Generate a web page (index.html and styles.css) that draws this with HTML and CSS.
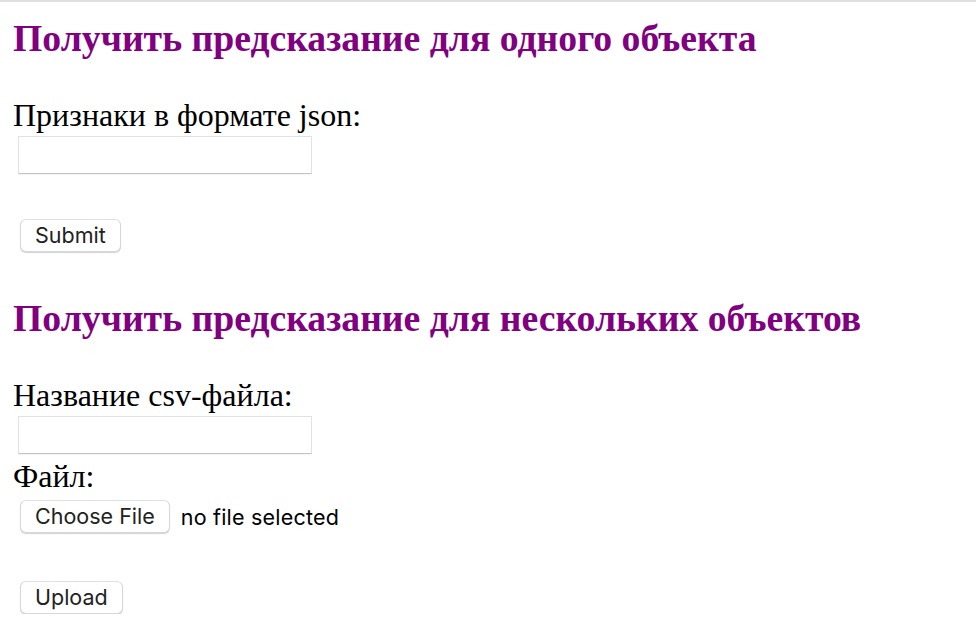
FILE: index.html
```html
<!DOCTYPE html>
<html lang="ru">
<head>
<meta charset="utf-8">
<title>Предсказание</title>
<link rel="stylesheet" href="styles.css">
</head>
<body>
<main class="page">
  <section class="block">
    <h2 class="title">Получить предсказание для одного объекта</h2>
    <form class="form">
      <label class="label" for="json">Признаки в формате json:</label>
      <input class="field" id="json" type="text">
      <div class="submit-row"><button class="btn" type="button">Submit</button></div>
    </form>
  </section>
  <section class="block block-second">
    <h2 class="title">Получить предсказание для нескольких объектов</h2>
    <form class="form">
      <label class="label" for="csv">Название csv-файла:</label>
      <input class="field" id="csv" type="text">
      <label class="label label-file">Файл:</label>
      <div class="file-row">
        <button class="btn" type="button">Choose File</button>
        <span class="file-name">no file selected</span>
      </div>
      <div class="submit-row upload-row"><button class="btn" type="button">Upload</button></div>
    </form>
  </section>
</main>
</body>
</html>
```

FILE: styles.css
```css
html, body {
  margin: 0;
  padding: 0;
  background: #ffffff;
}
body {
  border-top: 2px solid #e0e0e0;
  font-family: "Liberation Serif", "Times New Roman", serif;
  color: #000;
}
.page {
  display: flex;
  flex-direction: column;
  padding: 0 0 0 13px;
}
.block {
  display: flex;
  flex-direction: column;
}
.title {
  margin: 16px 0 0 0;
  font-family: "Liberation Serif", "Times New Roman", serif;
  font-weight: bold;
  font-size: 37.7px;
  line-height: 40px;
  color: #800080;
}
.block-second .title {
  margin-top: 46px;
}
.form {
  display: flex;
  flex-direction: column;
  align-items: flex-start;
  margin: 0;
}
.label {
  margin-top: 40px;
  font-size: 32px;
  line-height: 34px;
}
.field {
  margin: 4px 0 0 5px;
  width: 294px;
  height: 38px;
  box-sizing: border-box;
  border: 1px solid #e2e2e2;
  border-bottom-color: #c4c4c4;
  box-shadow: 0 1px 0 rgba(0,0,0,0.04);
  background: #fff;
  padding: 0 6px;
  outline: none;
}
.label-file {
  margin-top: 5px;
}
.submit-row {
  margin-top: 45px;
  padding-left: 7px;
}
.upload-row {
  margin-top: 48px;
}
.file-row {
  margin-top: 7px;
  padding-left: 7px;
  display: flex;
  align-items: center;
  gap: 11px;
}
.btn {
  height: 33px;
  box-sizing: border-box;
  padding: 0 14px;
  background: #fff;
  border: 1px solid #d8d8d8;
  border-top-color: #e0e0e0;
  border-radius: 6px;
  box-shadow: 0 1px 1px rgba(0,0,0,0.18);
  font-family: "Inter", "Liberation Sans", sans-serif;
  font-size: 21.5px;
  color: #222;
  line-height: 1;
}
.file-name {
  font-family: "Inter", "Liberation Sans", sans-serif;
  font-size: 21.5px;
  letter-spacing: 0.2px;
  color: #000;
}
```
